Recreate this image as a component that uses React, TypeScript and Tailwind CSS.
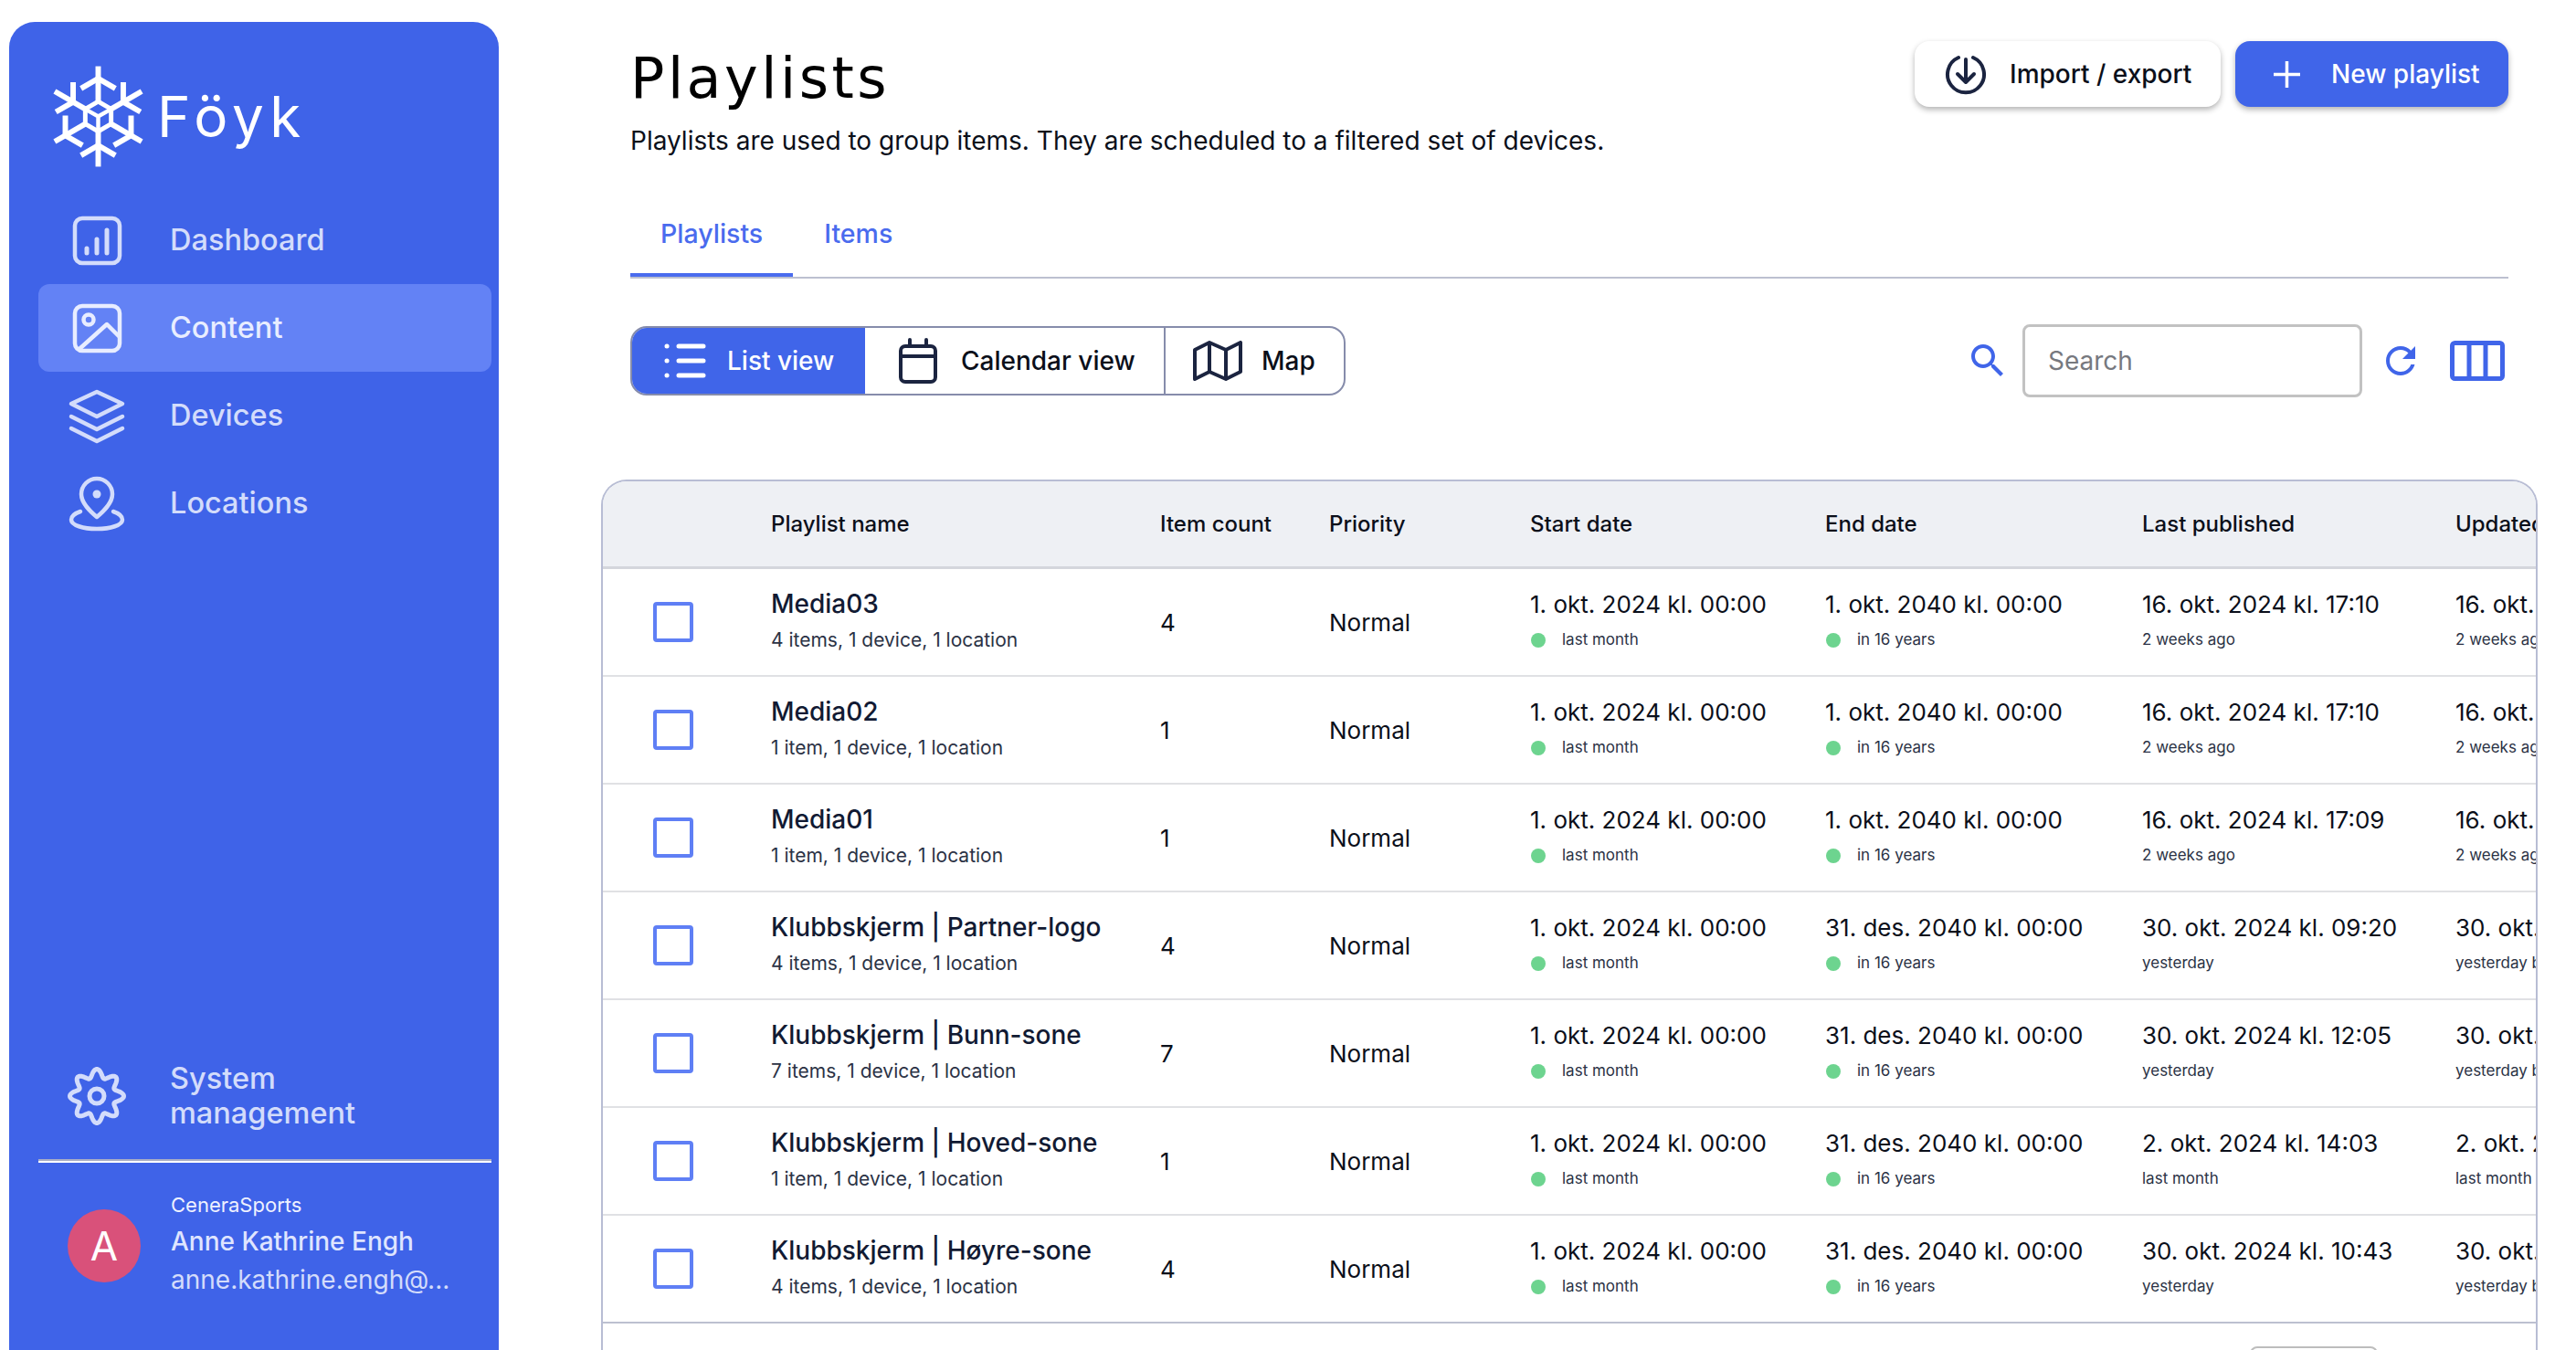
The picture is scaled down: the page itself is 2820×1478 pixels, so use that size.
import React from "react";

const rows = [
  { name: "Media03", meta: "4 items,  1 device,  1 location", count: 4, start: "1. okt. 2024 kl. 00:00", end: "1. okt. 2040 kl. 00:00", pub: "16. okt. 2024 kl. 17:10", ago: "2 weeks ago", upd: "16. okt. 2024 kl. 17:10", updAgo: "2 weeks ago by" },
  { name: "Media02", meta: "1 item,  1 device,  1 location", count: 1, start: "1. okt. 2024 kl. 00:00", end: "1. okt. 2040 kl. 00:00", pub: "16. okt. 2024 kl. 17:10", ago: "2 weeks ago", upd: "16. okt. 2024 kl. 17:10", updAgo: "2 weeks ago by" },
  { name: "Media01", meta: "1 item,  1 device,  1 location", count: 1, start: "1. okt. 2024 kl. 00:00", end: "1. okt. 2040 kl. 00:00", pub: "16. okt. 2024 kl. 17:09", ago: "2 weeks ago", upd: "16. okt. 2024 kl. 17:09", updAgo: "2 weeks ago by" },
  { name: "Klubbskjerm | Partner-logo", meta: "4 items,  1 device,  1 location", count: 4, start: "1. okt. 2024 kl. 00:00", end: "31. des. 2040 kl. 00:00", pub: "30. okt. 2024 kl. 09:20", ago: "yesterday", upd: "30. okt. 2024 kl. 09:20", updAgo: "yesterday by" },
  { name: "Klubbskjerm | Bunn-sone", meta: "7 items,  1 device,  1 location", count: 7, start: "1. okt. 2024 kl. 00:00", end: "31. des. 2040 kl. 00:00", pub: "30. okt. 2024 kl. 12:05", ago: "yesterday", upd: "30. okt. 2024 kl. 12:05", updAgo: "yesterday by" },
  { name: "Klubbskjerm | Hoved-sone", meta: "1 item,  1 device,  1 location", count: 1, start: "1. okt. 2024 kl. 00:00", end: "31. des. 2040 kl. 00:00", pub: "2. okt. 2024 kl. 14:03", ago: "last month", upd: "2. okt. 2024 kl. 14:03", updAgo: "last month by" },
  { name: "Klubbskjerm | Høyre-sone", meta: "4 items,  1 device,  1 location", count: 4, start: "1. okt. 2024 kl. 00:00", end: "31. des. 2040 kl. 00:00", pub: "30. okt. 2024 kl. 10:43", ago: "yesterday", upd: "30. okt. 2024 kl. 10:43", updAgo: "yesterday by" },
];

const gridCols = "grid grid-cols-[184px_426px_185px_220px_323px_347px_343px_200px]";

function gearPath() {
  let d = "";
  for (let i = 0; i <= 160; i++) {
    const a = (i / 160) * Math.PI * 2;
    const r = 25 + 4.5 * Math.cos(a * 8);
    d += `${i === 0 ? "M" : "L"}${(32 + r * Math.sin(a)).toFixed(2)} ${(32 - r * Math.cos(a)).toFixed(2)}`;
  }
  return d + "Z";
}

function Snowflake() {
  return (
    <svg width="99" height="111" viewBox="-50 -55.5 100 111" fill="none" stroke="#fff" strokeWidth="6">
      {/* arms alternate between arrow and Y-shaped branches */}
      {[0, 60, 120, 180, 240, 300].map((deg) => (
        <g key={deg} transform={`rotate(${deg})`}>
          <path d="M0 -16 V-55.5" />
          <path d={deg % 120 === 0 ? "M-19 -31 L0 -42 L19 -31" : "M-19 -43 L0 -32 L19 -43"} />
        </g>
      ))}
      <path d="M0 -16.5 L14.3 -8.25 V8.25 L0 16.5 L-14.3 8.25 V-8.25 Z" strokeWidth="5" />
      <path d="M-14 -8 L0 0 L14 -8 M0 0 V16" strokeWidth="4.5" />
    </svg>
  );
}

function NavIcon({ name }: { name: string }) {
  return (
    <svg width="64" height="64" viewBox="0 0 64 64" fill="none" stroke="currentColor" strokeWidth="4.5" strokeLinecap="round" strokeLinejoin="round" className="shrink-0">
      {name === "dashboard" && (
        <>
          <rect x="8" y="8" width="49" height="49" rx="8" />
          <path d="M21 41V46M32 31V46M43 21V46" strokeWidth="5" />
        </>
      )}
      {name === "content" && (
        <>
          <rect x="8" y="8" width="49" height="49" rx="8" />
          <circle cx="23" cy="23" r="5.5" />
          <path d="M13 55L43 28L56 41" />
        </>
      )}
      {name === "devices" && (
        <>
          <path d="M32 6L60 19L32 33L4 19Z" />
          <path d="M4 33L32 47L60 33" />
          <path d="M4 46L32 60L60 46" />
        </>
      )}
      {name === "locations" && (
        <>
          <path d="M32 47C25 41 15 32 15 22A17 17 0 0 1 49 22C49 32 39 41 32 47Z" />
          <circle cx="32" cy="22" r="4.5" fill="currentColor" stroke="none" />
          <path d="M14 41C8 43 4 46 4 50C4 56 17 60 32 60C47 60 60 56 60 50C60 46 56 43 50 41" />
        </>
      )}
      {name === "gear" && (
        <>
          <path d={gearPath()} strokeWidth="5" />
          <circle cx="32" cy="32" r="8" strokeWidth="5" />
        </>
      )}
    </svg>
  );
}

function NavItem({ icon, label, active }: { icon: string; label: string; active?: boolean }) {
  return (
    <div className={`flex h-24 items-center gap-[48px] rounded-xl pl-8 ${active ? "bg-[#6382f5] text-[#e8edff]" : "text-[#d3dcfb]"}`}>
      <NavIcon name={icon} />
      <span className="text-[32.5px] font-medium">{label}</span>
    </div>
  );
}

function Sidebar() {
  return (
    <aside className="ml-[10px] mt-6 flex h-[1454px] w-[536px] shrink-0 flex-col rounded-t-[28px] bg-[#3f63e8] pl-8 pr-2">
      <div className="ml-4 mt-12 flex h-[111px] items-center gap-[15px]">
        <Snowflake />
        <span className="text-[62px] font-normal leading-none tracking-[6px] text-white">Föyk</span>
      </div>
      <nav className="mt-[32px] flex flex-col">
        <NavItem icon="dashboard" label="Dashboard" />
        <NavItem icon="content" label="Content" active />
        <NavItem icon="devices" label="Devices" />
        <NavItem icon="locations" label="Locations" />
      </nav>
      <div className="mt-[563px] flex items-center gap-[48px] pl-8 text-[#d3dcfb]">
        <NavIcon name="gear" />
        <span className="text-[32.5px] font-medium leading-[38px]">
          System
          <br />
          management
        </span>
      </div>
      <div className="mt-[31px] h-1 border-t-2 border-[#a9adc4] bg-white" />
      <div className="mt-[28px] flex items-center gap-[33px] pl-8">
        <div className="mt-[6px] flex h-20 w-20 shrink-0 items-center justify-center rounded-full bg-[#d9517a] text-[44px] text-white">A</div>
        <div className="flex flex-col">
          <span className="text-[22px] leading-[36px] text-[#eef1ff]">CeneraSports</span>
          <span className="text-[28px] font-medium leading-[44px] text-[#dfe5ff]">Anne Kathrine Engh</span>
          <span className="text-[28px] leading-[40px] text-[#d3dcfb]">anne.kathrine.engh@...</span>
        </div>
      </div>
    </aside>
  );
}

function Header() {
  return (
    <header className="flex items-start justify-between pt-[45px]">
      <div className="pt-[5px]">
        <h1 className="text-[62px] font-normal leading-[72px] tracking-[3.5px] text-black [font-family:'DejaVu_Sans',sans-serif]">Playlists</h1>
        <p className="mt-3 text-[28px] leading-[40px] text-[#0b0f1a]">Playlists are used to group items. They are scheduled to a filtered set of devices.</p>
      </div>
      <div className="flex gap-4">
        <button className="flex h-[72px] w-[335px] items-center gap-[25px] rounded-2xl bg-white pl-[33px] text-[28px] font-medium text-[#0b0f1a] shadow-[0_3px_6px_rgba(0,0,0,0.3)]">
          <svg width="46" height="46" viewBox="0 0 46 46" fill="none" stroke="#1b2440" strokeWidth="4" strokeLinecap="round" strokeLinejoin="round">
            <path d="M15 5A20 20 0 1 0 31 5" />
            <path d="M23 7V31M14 23L23 32L32 23" />
          </svg>
          Import / export
        </button>
        <button className="flex h-[72px] w-[299px] items-center gap-[34px] rounded-2xl bg-[#4065e9] pl-[42px] text-[28px] font-medium text-white shadow-[0_3px_6px_rgba(0,0,0,0.3)]">
          <svg width="29" height="29" viewBox="0 0 29 29" stroke="#fff" strokeWidth="3.5">
            <path d="M14.5 0V29M0 14.5H29" />
          </svg>
          New playlist
        </button>
      </div>
    </header>
  );
}

function Tabs() {
  return (
    <div className="mt-[33px] flex border-b-2 border-[#bcc0d0] text-[28.5px] font-medium text-[#4a6bee]">
      <div className="flex h-24 items-center border-b-4 border-[#4a6bee] px-[33px] pt-[6px]">Playlists</div>
      <div className="flex h-24 items-center px-[34px] pt-[2px]">Items</div>
    </div>
  );
}

function Toolbar() {
  return (
    <div className="mt-[50px] flex h-20 items-center justify-between">
      <div className="flex h-[76px] w-[783px] items-stretch overflow-hidden rounded-[18px] border-2 border-[#868cab] text-[28px] font-medium text-[#0b0f1a]">
        <div className="flex w-[255px] items-center gap-[23px] bg-[#4065e9] pl-[35px] text-white">
          <svg width="46" height="38" viewBox="0 0 46 38" fill="none" stroke="#fff" strokeWidth="5" strokeLinecap="round">
            <path d="M3 3H3.1M3 19H3.1M3 35H3.1M16 3H43M16 19H43M16 35H43" />
          </svg>
          List view
        </div>
        <div className="flex w-[329px] items-center gap-[26px] border-r-2 border-[#868cab] pl-[37px]">
          <svg width="42" height="50" viewBox="0 0 42 50" fill="none" stroke="#1b2440" strokeWidth="4" strokeLinecap="round" strokeLinejoin="round">
            <rect x="2" y="9" width="38" height="39" rx="5" />
            <path d="M2 20H40M12 2V9M30 2V9" />
          </svg>
          Calendar view
        </div>
        <div className="flex flex-1 items-center gap-[21px] pl-[30px]">
          <svg width="54" height="44" viewBox="0 0 54 44" fill="none" stroke="#1b2440" strokeWidth="4" strokeLinejoin="round">
            <path d="M2 10L18 2L36 10L52 2V34L36 42L18 34L2 42Z" />
            <path d="M18 2V34M36 10V42" />
          </svg>
          Map
        </div>
      </div>
      <div className="flex items-center">
        <svg width="48" height="48" viewBox="0 0 24 24" fill="#4065e9" className="mr-[14px]">
          <path d="M15.5 14h-.79l-.28-.27C15.41 12.59 16 11.11 16 9.5 16 5.91 13.09 3 9.5 3S3 5.91 3 9.5 5.91 16 9.5 16c1.61 0 3.09-.59 4.23-1.57l.27.28v.79l5 4.99L20.49 19l-4.99-5zm-6 0C7.01 14 5 11.99 5 9.5S7.01 5 9.5 5 14 7.01 14 9.5 11.99 14 9.5 14z" />
        </svg>
        <div className="flex h-20 w-[372px] items-center rounded-lg border-[3px] border-[#c2c2c2] pl-[25px] text-[28px] text-[#77797f]">Search</div>
        <svg width="48" height="48" viewBox="0 0 24 24" fill="#4065e9" className="ml-[18px]">
          <path d="M17.65 6.35C16.2 4.9 14.21 4 12 4c-4.42 0-7.99 3.58-7.99 8s3.57 8 7.99 8c3.73 0 6.84-2.55 7.73-6h-2.08c-.82 2.33-3.04 4-5.65 4-3.31 0-6-2.69-6-6s2.69-6 6-6c1.66 0 3.14.69 4.22 1.78L13 11h7V4l-2.35 2.35z" />
        </svg>
        <svg width="60" height="44" viewBox="0 0 60 44" fill="none" stroke="#4065e9" strokeWidth="5" className="ml-[30px] mr-[4px]">
          <rect x="2.5" y="2.5" width="55" height="39" rx="3" />
          <path d="M21 2V42M39 2V42" />
        </svg>
      </div>
    </div>
  );
}

function DateCell({ main, sub, dot }: { main: string; sub: string; dot?: boolean }) {
  return (
    <div className="flex flex-col justify-center whitespace-nowrap">
      <span className="text-[26px] leading-[39px] text-[#0b0f1a]">{main}</span>
      <span className="flex items-center gap-[18px] text-[17px] leading-[39px] text-[#2b3245]">
        {dot && <span className="ml-[1px] h-4 w-4 rounded-full bg-[#6dd48f]" />}
        {sub}
      </span>
    </div>
  );
}

function PlaylistTable() {
  return (
    <div className="relative -mx-8 mt-[90px] h-[960px] overflow-hidden rounded-t-[28px] border-x-2 border-t-2 border-[#b8bdd4]">
      <div className={`${gridCols} h-[96px] items-center border-b-[3px] border-[#d4d6dc] bg-[#eef0f4] text-[24px] font-medium text-[#0b0f1a]`}>
        <span />
        <span>Playlist name</span>
        <span>Item count</span>
        <span>Priority</span>
        <span>Start date</span>
        <span>End date</span>
        <span>Last published</span>
        <span className="whitespace-nowrap">Updated at</span>
      </div>
      {rows.map((r, i) => (
        <div key={r.name} className={`${gridCols} h-[118px] items-center border-b-2 ${i === rows.length - 1 ? "border-[#bcc0d0]" : "border-[#e0e1e4]"}`}>
          <div className="pl-[55px]">
            <div className="h-11 w-11 rounded-[4px] border-4 border-[#5f7ff5]" />
          </div>
          <div className="flex flex-col whitespace-nowrap">
            <span className="text-[28px] font-medium leading-[39px] text-[#111a33]">{r.name}</span>
            <span className="text-[21px] leading-[39px] text-[#2b3245]">{r.meta}</span>
          </div>
          <span className="text-[26px] text-[#0b0f1a]">{r.count}</span>
          <span className="text-[26px] text-[#0b0f1a]">Normal</span>
          <DateCell main={r.start} sub="last month" dot />
          <DateCell main={r.end} sub="in 16 years" dot />
          <DateCell main={r.pub} sub={r.ago} />
          <DateCell main={r.upd} sub={r.updAgo} />
        </div>
      ))}
      <div className="absolute left-[1803px] top-[947px] h-10 w-[140px] rounded-lg border-2 border-[#bdbdbd]" />
    </div>
  );
}

export default function App() {
  return (
    <div className="flex h-[1478px] w-[2820px] overflow-hidden bg-white font-['Inter',sans-serif]">
      <Sidebar />
      <main className="min-w-0 flex-1 pl-[144px] pr-[74px]">
        <Header />
        <Tabs />
        <Toolbar />
        <PlaylistTable />
      </main>
    </div>
  );
}
